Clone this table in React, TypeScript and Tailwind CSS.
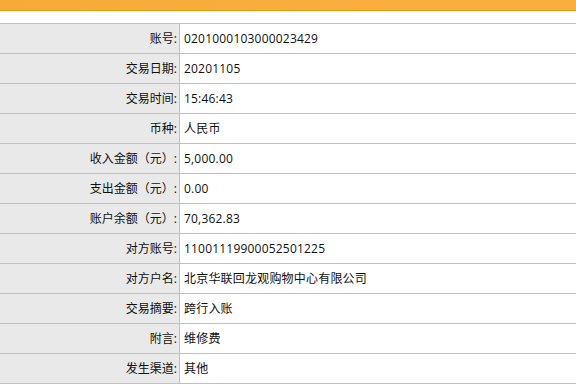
const rows: [string, string][] = [
  ["账号:", "0201000103000023429"],
  ["交易日期:", "20201105"],
  ["交易时间:", "15:46:43"],
  ["币种:", "人民币"],
  ["收入金额（元）:", "5,000.00"],
  ["支出金额（元）:", "0.00"],
  ["账户余额（元）:", "70,362.83"],
  ["对方账号:", "11001119900052501225"],
  ["对方户名:", "北京华联回龙观购物中心有限公司"],
  ["交易摘要:", "跨行入账"],
  ["附言:", "维修费"],
  ["发生渠道:", "其他"],
];

export default function App() {
  return (
    <div className="w-[576px] h-[387px] bg-white overflow-hidden font-['Open_Sans','Noto_Sans_CJK_SC',sans-serif] text-[12px] text-[#111]">
      <div className="h-[11px] bg-gradient-to-r from-[#f6ab38] via-[#f7ae3c] to-[#f7b03e] border-b border-[#ec9a0a]" />
      <div className="mt-[12px] border-t border-[#c0c0c0]">
        {rows.map(([label, value]) => (
          <div key={label} className="flex h-[30px] border-b border-[#c0c0c0]">
            <div className="w-[180px] shrink-0 bg-[#e8e9e8] border-r border-[#c0c0c0] flex items-center justify-end pr-[2px]">
              {label}
            </div>
            <div className="flex-1 flex items-center pl-[4px] tracking-[0.2px]">{value}</div>
          </div>
        ))}
      </div>
    </div>
  );
}
